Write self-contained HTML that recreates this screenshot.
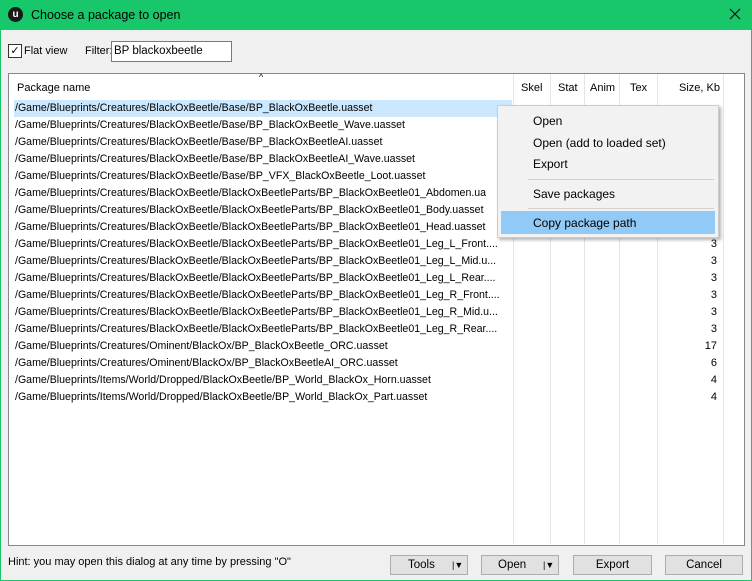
<!DOCTYPE html>
<html><head><style>
body{margin:0;width:752px;height:581px;overflow:hidden;background:#f0f0f0;font-family:"Liberation Sans",sans-serif;font-size:11px;color:#000;position:relative}
.a{position:absolute}
.title{left:0;top:0;width:752px;height:30px;background:#17c76a}
.list{left:8px;top:73px;width:735px;height:471px;background:#fff;border:1px solid #828790}
.row{position:absolute;left:6px;width:498px;overflow:hidden;height:17px;line-height:17px;white-space:nowrap;font-size:10.6px}
.sz{position:absolute;left:660px;width:48px;text-align:right;height:17px;line-height:17px;font-size:11px}
.vl{position:absolute;top:0;width:1px;height:470px;background:#e5e5e5}
.hd{position:absolute;top:8px;font-size:11px}
.btn{position:absolute;top:555px;height:18px;background:#e1e1e1;border:1px solid #adadad;text-align:center;line-height:18px;font-size:11.5px}
.menu{left:497px;top:105px;width:220px;height:131px;background:#f2f2f2;border:1px solid #ccc;box-shadow:2px 2px 3px rgba(0,0,0,.3)}
.mi{position:absolute;left:35px;font-size:12px}
</style></head><body>
<div class="a" style="left:0;top:0;width:1px;height:581px;background:#17c76a"></div>
<div class="a" style="right:0;top:0;width:1px;height:581px;background:#17c76a"></div>
<div class="a" style="left:0;bottom:0;width:752px;height:1px;background:#17c76a"></div>
<div class="a title">
<div class="a" style="left:8px;top:7px;width:15px;height:15px;border-radius:50%;background:#1a1a1a;color:#fff;font-size:10px;font-weight:bold;text-align:center;line-height:15px">u</div>
<div class="a" style="left:31px;top:8px;font-size:12.5px">Choose a package to open</div>
<svg class="a" style="left:729px;top:8px" width="12" height="12"><path d="M1 1L11 11M11 1L1 11" stroke="#111" stroke-width="1.2"/></svg>
</div>
<div class="a" style="left:8px;top:44px;width:12px;height:12px;border:1px solid #333;background:#fff;font-size:11px;line-height:12px;text-align:center">✓</div>
<div class="a" style="left:24px;top:45px">Flat view</div>
<div class="a" style="left:85px;top:45px">Filter:</div>
<div class="a" style="left:111px;top:41px;width:117px;height:19px;border:1px solid #7a7a7a;background:#fff;line-height:19px;padding-left:2px;font-size:11.5px">BP blackoxbeetle</div>
<div class="a list">
<div class="vl" style="left:504px"></div><div class="vl" style="left:541px"></div><div class="vl" style="left:575px"></div><div class="vl" style="left:610px"></div><div class="vl" style="left:648px"></div><div class="vl" style="left:714px"></div>
<div class="a" style="left:250px;top:-2px;font-size:9px">^</div>
<div class="hd" style="left:8px">Package name</div>
<div class="hd" style="left:512px">Skel</div>
<div class="hd" style="left:549px">Stat</div>
<div class="hd" style="left:581px">Anim</div>
<div class="hd" style="left:621px">Tex</div>
<div class="hd" style="left:670px">Size, Kb</div>
<div class="a" style="left:5px;top:26px;width:498px;height:17px;background:#cce8ff"></div>
<div class="row" style="top:26px">/Game/Blueprints/Creatures/BlackOxBeetle/Base/BP_BlackOxBeetle.uasset</div>
<div class="row" style="top:43px">/Game/Blueprints/Creatures/BlackOxBeetle/Base/BP_BlackOxBeetle_Wave.uasset</div>
<div class="row" style="top:60px">/Game/Blueprints/Creatures/BlackOxBeetle/Base/BP_BlackOxBeetleAI.uasset</div>
<div class="row" style="top:77px">/Game/Blueprints/Creatures/BlackOxBeetle/Base/BP_BlackOxBeetleAI_Wave.uasset</div>
<div class="row" style="top:94px">/Game/Blueprints/Creatures/BlackOxBeetle/Base/BP_VFX_BlackOxBeetle_Loot.uasset</div>
<div class="row" style="top:111px">/Game/Blueprints/Creatures/BlackOxBeetle/BlackOxBeetleParts/BP_BlackOxBeetle01_Abdomen.ua</div>
<div class="row" style="top:128px">/Game/Blueprints/Creatures/BlackOxBeetle/BlackOxBeetleParts/BP_BlackOxBeetle01_Body.uasset</div>
<div class="row" style="top:145px">/Game/Blueprints/Creatures/BlackOxBeetle/BlackOxBeetleParts/BP_BlackOxBeetle01_Head.uasset</div>
<div class="row" style="top:162px">/Game/Blueprints/Creatures/BlackOxBeetle/BlackOxBeetleParts/BP_BlackOxBeetle01_Leg_L_Front....</div>
<div class="row" style="top:179px">/Game/Blueprints/Creatures/BlackOxBeetle/BlackOxBeetleParts/BP_BlackOxBeetle01_Leg_L_Mid.u...</div>
<div class="row" style="top:196px">/Game/Blueprints/Creatures/BlackOxBeetle/BlackOxBeetleParts/BP_BlackOxBeetle01_Leg_L_Rear....</div>
<div class="row" style="top:213px">/Game/Blueprints/Creatures/BlackOxBeetle/BlackOxBeetleParts/BP_BlackOxBeetle01_Leg_R_Front....</div>
<div class="row" style="top:230px">/Game/Blueprints/Creatures/BlackOxBeetle/BlackOxBeetleParts/BP_BlackOxBeetle01_Leg_R_Mid.u...</div>
<div class="row" style="top:247px">/Game/Blueprints/Creatures/BlackOxBeetle/BlackOxBeetleParts/BP_BlackOxBeetle01_Leg_R_Rear....</div>
<div class="row" style="top:264px">/Game/Blueprints/Creatures/Ominent/BlackOx/BP_BlackOxBeetle_ORC.uasset</div>
<div class="row" style="top:281px">/Game/Blueprints/Creatures/Ominent/BlackOx/BP_BlackOxBeetleAI_ORC.uasset</div>
<div class="row" style="top:298px">/Game/Blueprints/Items/World/Dropped/BlackOxBeetle/BP_World_BlackOx_Horn.uasset</div>
<div class="row" style="top:315px">/Game/Blueprints/Items/World/Dropped/BlackOxBeetle/BP_World_BlackOx_Part.uasset</div>
<div class="sz" style="top:162px">3</div><div class="sz" style="top:179px">3</div><div class="sz" style="top:196px">3</div><div class="sz" style="top:213px">3</div><div class="sz" style="top:230px">3</div><div class="sz" style="top:247px">3</div>
<div class="sz" style="top:264px">17</div><div class="sz" style="top:281px">6</div><div class="sz" style="top:298px">4</div><div class="sz" style="top:315px">4</div>
</div>
<div class="a menu">
<div class="mi" style="top:8px">Open</div>
<div class="mi" style="top:30px">Open (add to loaded set)</div>
<div class="mi" style="top:51px">Export</div>
<div class="a" style="left:30px;top:73px;width:186px;height:1px;background:#d0d0d0"></div>
<div class="mi" style="top:81px">Save packages</div>
<div class="a" style="left:30px;top:102px;width:186px;height:1px;background:#d0d0d0"></div>
<div class="a" style="left:3px;top:105px;width:214px;height:23px;background:#91c9f7"></div>
<div class="mi" style="top:110px">Copy package path</div>
</div>
<div class="a" style="left:8px;top:556px">Hint: you may open this dialog at any time by pressing "O"</div>
<div class="btn" style="left:390px;width:76px"><span style="position:absolute;left:17px">Tools</span><span style="position:absolute;left:61px;font-size:9px">|▼</span></div>
<div class="btn" style="left:481px;width:76px"><span style="position:absolute;left:16px">Open</span><span style="position:absolute;left:61px;font-size:9px">|▼</span></div>
<div class="btn" style="left:573px;width:77px">Export</div>
<div class="btn" style="left:665px;width:76px">Cancel</div>
</body></html>
